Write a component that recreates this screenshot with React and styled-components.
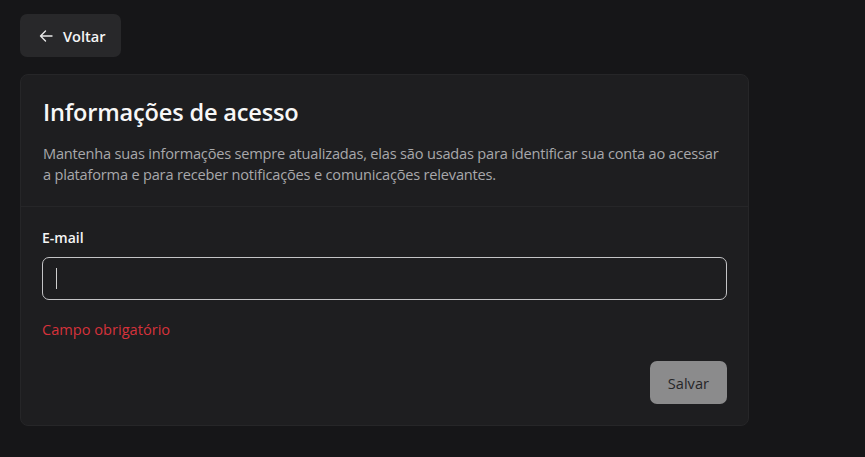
import React from "react";
import styled, { createGlobalStyle } from "styled-components";

const GlobalStyle = createGlobalStyle`
  html, body {
    margin: 0;
    padding: 0;
    background: #161618;
    font-family: "Open Sans", "Noto Sans", sans-serif;
    color: #f2f2f2;
  }
  * { box-sizing: border-box; }
`;

const Page = styled.main`
  min-height: 457px;
  padding: 14px 20px;
  display: flex;
  flex-direction: column;
  align-items: flex-start;
  gap: 17px;
`;

const BackButton = styled.button`
  display: flex;
  align-items: center;
  gap: 10px;
  height: 43px;
  padding: 0 15px 0 19px;
  border: none;
  border-radius: 7px;
  background: #28282a;
  color: #f5f5f5;
  font-family: inherit;
  font-size: 14.6px;
  font-weight: 600;
  cursor: pointer;
`;

const Card = styled.section`
  width: 729px;
  background: #1e1e20;
  border: 1px solid #262628;
  border-radius: 8px;
`;

const CardHeader = styled.header`
  padding: 20px 22px 21px;
  border-bottom: 1px solid #262628;
`;

const Title = styled.h1`
  margin: 0 0 14px;
  font-size: 23.6px;
  font-weight: 600;
  line-height: 34px;
  color: #f7f7f7;
  letter-spacing: -0.2px;
`;

const Description = styled.p`
  margin: 0;
  max-width: 680px;
  font-size: 14.6px;
  line-height: 21px;
  color: #a8a8ab;
  letter-spacing: -0.2px;
`;

const Form = styled.form`
  padding: 21px 21px 21px;
  display: flex;
  flex-direction: column;
`;

const Label = styled.label`
  font-size: 14px;
  font-weight: 600;
  color: #f5f5f5;
  line-height: 20px;
  margin-bottom: 9px;
`;

const InputWrap = styled.div`
  position: relative;
`;

const Input = styled.input`
  height: 43px;
  width: 100%;
  border: 1.5px solid #c4c4c6;
  border-radius: 7px;
  background: #1e1e20;
  color: #f5f5f5;
  font-family: inherit;
  font-size: 15px;
  padding: 0 14px;
  outline: none;
  caret-color: #d0d0d0;
`;

const Caret = styled.span`
  position: absolute;
  left: 14px;
  top: 11px;
  width: 1px;
  height: 21px;
  background: #cfcfcf;
`;

const ErrorText = styled.span`
  margin-top: 19px;
  font-size: 14.6px;
  line-height: 20px;
  color: #d5323b;
`;

const Actions = styled.div`
  display: flex;
  justify-content: flex-end;
  margin-top: 22px;
`;

const SaveButton = styled.button`
  height: 43px;
  padding: 0 18px;
  border: none;
  border-radius: 7px;
  background: #8b8b8c;
  color: #262628;
  font-family: inherit;
  font-size: 14.6px;
  font-weight: 500;
  cursor: not-allowed;
`;

const ArrowLeft = () => (
  <svg width="14" height="14" viewBox="0 0 14 14" fill="none">
    <path
      d="M13 7H1.5M6.5 2L1.5 7l5 5"
      stroke="#e8e8e8"
      strokeWidth="1.4"
      strokeLinecap="round"
      strokeLinejoin="round"
    />
  </svg>
);

export default function App() {
  return (
    <>
      <GlobalStyle />
      <Page>
        <BackButton type="button">
          <ArrowLeft />
          Voltar
        </BackButton>
        <Card>
          <CardHeader>
            <Title>Informações de acesso</Title>
            <Description>
              Mantenha suas informações sempre atualizadas, elas são usadas para identificar sua conta ao acessar
              a plataforma e para receber notificações e comunicações relevantes.
            </Description>
          </CardHeader>
          <Form onSubmit={(e) => e.preventDefault()}>
            <Label htmlFor="email">E-mail</Label>
            <InputWrap>
              <Input id="email" type="email" />
              <Caret />
            </InputWrap>
            <ErrorText>Campo obrigatório</ErrorText>
            <Actions>
              <SaveButton type="submit" disabled>
                Salvar
              </SaveButton>
            </Actions>
          </Form>
        </Card>
      </Page>
    </>
  );
}
